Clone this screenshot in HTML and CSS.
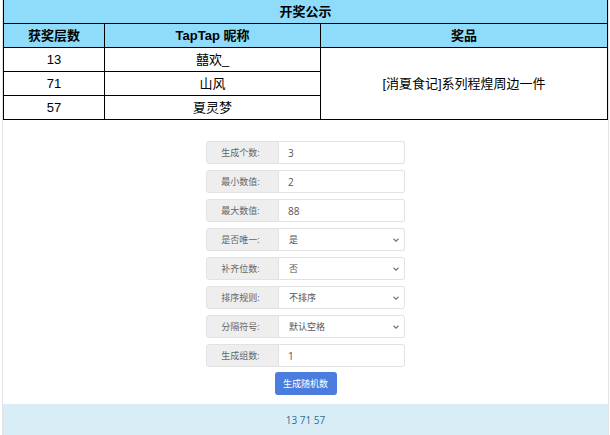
FILE: index.html
```html
<!DOCTYPE html>
<html lang="zh">
<head>
<meta charset="utf-8">
<title>开奖公示</title>
<link rel="stylesheet" href="styles.css">
</head>
<body>
<div class="page">
  <table class="prize">
    <colgroup><col class="w1"><col class="w2"><col class="w3"></colgroup>
    <tr><th class="title" colspan="3">开奖公示</th></tr>
    <tr><th class="c1">获奖层数</th><th class="c2">TapTap 昵称</th><th class="c3">奖品</th></tr>
    <tr><td class="c1">13</td><td class="c2">囍欢_</td><td class="c3" rowspan="3">[消夏食记]系列程煌周边一件</td></tr>
    <tr><td class="c1">71</td><td class="c2">山风</td></tr>
    <tr><td class="c1">57</td><td class="c2">夏灵梦</td></tr>
  </table>

  <div class="form">
    <div class="group"><span class="label">生成个数:</span><span class="field">3</span></div>
    <div class="group"><span class="label">最小数值:</span><span class="field">2</span></div>
    <div class="group"><span class="label">最大数值:</span><span class="field">88</span></div>
    <div class="group"><span class="label">是否唯一:</span><span class="field select"><span class="val">是</span><svg class="chev" width="6" height="4" viewBox="0 0 6 4"><polyline points="0.5,0.8 3,3.2 5.5,0.8" fill="none" stroke="#777" stroke-width="1.2"/></svg></span></div>
    <div class="group"><span class="label">补齐位数:</span><span class="field select"><span class="val">否</span><svg class="chev" width="6" height="4" viewBox="0 0 6 4"><polyline points="0.5,0.8 3,3.2 5.5,0.8" fill="none" stroke="#777" stroke-width="1.2"/></svg></span></div>
    <div class="group"><span class="label">排序规则:</span><span class="field select"><span class="val">不排序</span><svg class="chev" width="6" height="4" viewBox="0 0 6 4"><polyline points="0.5,0.8 3,3.2 5.5,0.8" fill="none" stroke="#777" stroke-width="1.2"/></svg></span></div>
    <div class="group"><span class="label">分隔符号:</span><span class="field select"><span class="val">默认空格</span><svg class="chev" width="6" height="4" viewBox="0 0 6 4"><polyline points="0.5,0.8 3,3.2 5.5,0.8" fill="none" stroke="#777" stroke-width="1.2"/></svg></span></div>
    <div class="group"><span class="label">生成组数:</span><span class="field">1</span></div>
    <button class="btn">生成随机数</button>
  </div>

  <div class="result">13 71 57</div>
</div>
</body>
</html>
```

FILE: styles.css
```css
html, body {
  margin: 0;
  padding: 0;
  background: #fff;
  overflow: hidden;
}
.page {
  margin-left: 2px;
  width: 607px;
  height: 435px;
  box-sizing: border-box;
  border-left: 1px solid #e3e3e3;
  border-right: 1px solid #e3e3e3;
  display: flex;
  flex-direction: column;
}
.prize {
  border-collapse: separate;
  border-spacing: 0;
  width: 605px;
  table-layout: fixed;
  font-family: "Liberation Sans", "Noto Sans CJK SC", sans-serif;
  font-size: 13px;
  color: #000;
}
.w1 { width: 102px; }
.w2 { width: 216px; }
.w3 { width: 287px; }
.prize th, .prize td {
  height: 23px;
  line-height: 16px;
  padding: 0;
  text-align: center;
  vertical-align: middle;
  border-bottom: 1px solid #000;
  border-right: 1px solid #000;
  box-sizing: content-box;
  overflow: hidden;
}
.prize th {
  background: #8edcf9;
  font-weight: bold;
}
.prize .title { border-left: 1px solid #000; }
.prize .c1 { border-left: 1px solid #000; }

.form {
  margin: 21px auto 0;
  width: 199px;
  display: flex;
  flex-direction: column;
  gap: 6px;
  font-family: "Open Sans", "Noto Sans CJK SC", sans-serif;
  font-size: 9px;
  color: #555;
}
.group {
  display: flex;
  height: 23px;
}
.label {
  width: 73px;
  box-sizing: border-box;
  background: #eee;
  border: 1px solid #e2e2e2;
  border-radius: 3px 0 0 3px;
  display: flex;
  align-items: center;
  justify-content: center;
  padding-right: 4px;
  color: #666;
}
.field {
  flex: 1;
  box-sizing: border-box;
  border: 1px solid #e2e2e2;
  border-left: none;
  border-radius: 0 3px 3px 0;
  display: flex;
  align-items: center;
  padding-left: 9px;
  padding-right: 5px;
  color: #555;
  font-size: 10px;
}
.select { font-size: 9px; padding-left: 10px; }
.select .val { flex: 1; }
.chev { display: block; }
.btn {
  align-self: center;
  margin-top: -1px;
  width: 62px;
  height: 23px;
  border: none;
  border-radius: 3px;
  background: #4a7ddd;
  color: #fff;
  font-family: "Open Sans", "Noto Sans CJK SC", sans-serif;
  font-size: 9px;
  padding: 0;
}
.result {
  margin-top: auto;
  height: 31px;
  box-sizing: border-box;
  padding-top: 9px;
  line-height: 14px;
  background: #d9edf7;
  color: #31708f;
  text-align: center;
  font-family: "Open Sans", sans-serif;
  font-size: 10px;
}
```
